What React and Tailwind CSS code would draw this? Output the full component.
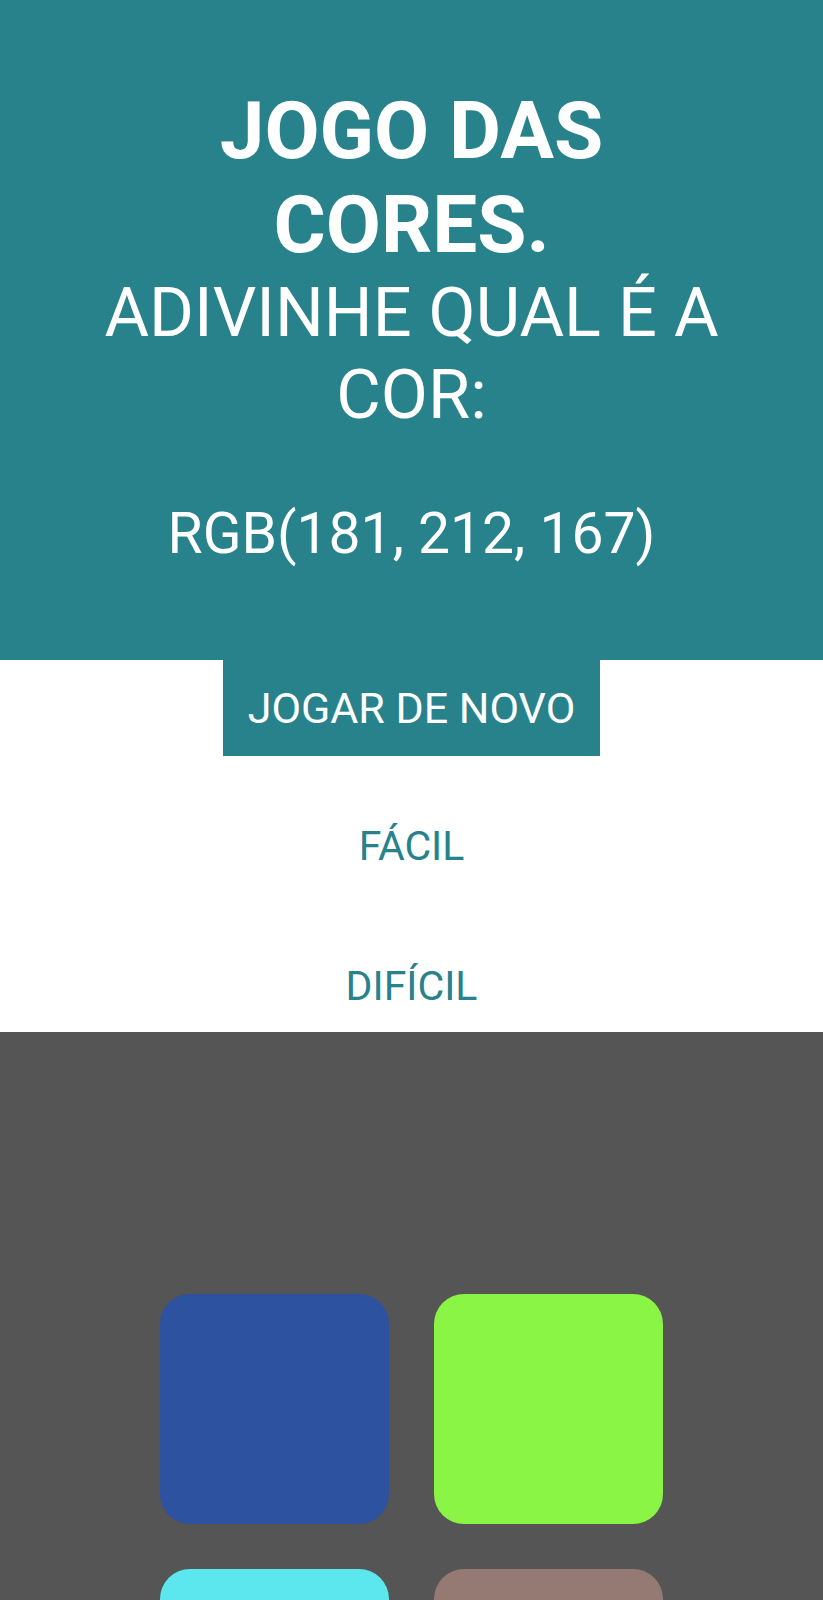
import React from "react";

const squares = ["#2c52a0", "#8af545", "#5ce6ee", "#957973", "#c9a24b", "#7a3fb0"];

export default function App() {
  return (
    <div className="font-['Roboto','Liberation_Sans',sans-serif] bg-white">
      <header className="bg-[#27828c] text-white text-center pt-[84px] pb-[93px]">
        <h1 className="font-bold text-[80px] leading-[94px] uppercase">
          <span className="block">Jogo das</span>
          <span className="block">cores.</span>
        </h1>
        <p className="text-[68.5px] leading-[82px] uppercase">
          <span className="block">Adivinhe qual é a</span>
          <span className="block">cor:</span>
        </p>
        <p className="mt-[64px] text-[57px] leading-[67px] uppercase">RGB(181, 212, 167)</p>
      </header>
      <nav className="flex flex-col items-center">
        <button className="w-[377px] h-[96px] bg-[#27828c] text-white text-[43px] uppercase">
          Jogar de novo
        </button>
        <div className="flex flex-col items-center pt-[66px] pb-[22px] gap-[92px]">
          <button className="text-[#27828c] text-[41px] leading-[48px] uppercase">Fácil</button>
          <button className="text-[#27828c] text-[41px] leading-[48px] uppercase">Difícil</button>
        </div>
      </nav>
      <main className="bg-[#555555] pt-[262px] pb-[60px]">
        <div className="mx-auto w-[503px] grid grid-cols-2 gap-x-[45px] gap-y-[45px]">
          {squares.map((c, i) => (
            <div key={i} className="h-[230px] rounded-[30px]" style={{ backgroundColor: c }} />
          ))}
        </div>
      </main>
    </div>
  );
}
